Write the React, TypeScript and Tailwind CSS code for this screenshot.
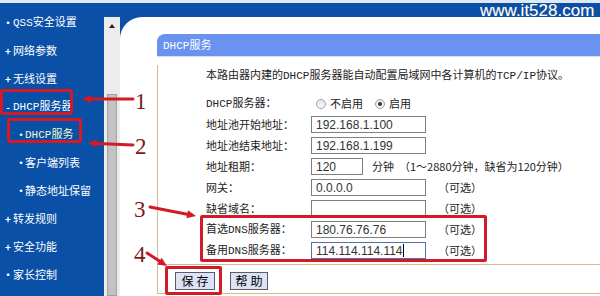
import React from "react";

const cjk = "font-['Noto_Sans_CJK_SC','Noto_Sans',sans-serif]";

const menu = [
  { label: "QSS安全设置", mark: "•", sub: false },
  { label: "网络参数", mark: "+", sub: false },
  { label: "无线设置", mark: "+", sub: false },
  { label: "DHCP服务器", mark: "-", sub: false },
  { label: "DHCP服务", mark: "•", sub: true, active: true },
  { label: "客户端列表", mark: "•", sub: true },
  { label: "静态地址保留", mark: "•", sub: true },
  { label: "转发规则", mark: "+", sub: false },
  { label: "安全功能", mark: "+", sub: false },
  { label: "家长控制", mark: "•", sub: false },
  { label: "上网控制", mark: "+", sub: false },
];

// latin runs in the old router UI are narrow monospace (SimSun-ish)
function T({ s }: { s: string }) {
  const parts = s.split(/([A-Za-z/]+)/);
  return (
    <span>
      {parts.map((p, i) =>
        /^[A-Za-z/]+$/.test(p) ? (
          <span key={i} className="font-['Liberation_Mono',monospace] text-[11px]">
            {p}
          </span>
        ) : (
          <React.Fragment key={i}>{p}</React.Fragment>
        )
      )}
    </span>
  );
}

function Field({ value, width = "w-[115px]", focused }: { value: string; width?: string; focused?: boolean }) {
  return (
    <div
      className={`${width} shrink-0 h-[17px] bg-white border flex items-center pl-[4px] text-[12px] text-[#333] font-['Liberation_Sans',sans-serif] ${
        focused ? "border-[#4f72a8]" : "border-[#7f7f7f]"
      }`}
    >
      {value}
      {focused && <span className="w-px h-[13px] bg-black" />}
    </div>
  );
}

function Row({ label, children }: { label: string; children: React.ReactNode }) {
  return (
    <div className="h-[21px] flex items-center">
      <div className="w-[105px] shrink-0 text-[11px] text-[#222] whitespace-nowrap">
        <T s={label} />
      </div>
      {children}
    </div>
  );
}

function Optional() {
  return <span className="ml-[12px] text-[11px] text-[#222] whitespace-nowrap">（可选）</span>;
}

function Radio({ checked }: { checked?: boolean }) {
  return (
    <span className="w-[10px] h-[10px] rounded-full border border-[#a0a0a0] bg-gradient-to-b from-[#e4e4e4] to-[#fafafa] flex items-center justify-center">
      {checked && <span className="w-[4px] h-[4px] rounded-full bg-[#333]" />}
    </span>
  );
}

function Arrow({ x1, y1, x2, y2 }: { x1: number; y1: number; x2: number; y2: number }) {
  const a = Math.atan2(y2 - y1, x2 - x1);
  const l = 9;
  const w = 4;
  const bx = x2 - l * Math.cos(a);
  const by = y2 - l * Math.sin(a);
  const px = -Math.sin(a) * w;
  const py = Math.cos(a) * w;
  return (
    <g>
      <line x1={x1} y1={y1} x2={bx} y2={by} stroke="#d31a26" strokeWidth={3} strokeLinecap="round" />
      <polygon points={`${x2},${y2} ${bx + px},${by + py} ${bx - px},${by - py}`} fill="#d31a26" />
    </g>
  );
}

export default function App() {
  return (
    <div className={`w-[600px] h-[296px] overflow-hidden relative flex flex-col bg-white ${cjk}`}>
      <div className="h-[3px] shrink-0 bg-[#dfe9f5]" />
      <div className="flex flex-1 min-h-0">
        {/* sidebar menu */}
        <aside className="w-[104px] shrink-0 bg-[#0a50a6] pt-[5px] flex flex-col overflow-hidden">
          {menu.map((m) => (
            <div
              key={m.label}
              className={`h-[28px] shrink-0 flex items-center text-[11px] whitespace-nowrap ${m.sub ? "pl-[16px]" : "pl-[3px]"} ${
                m.active ? "text-[#eef7cf]" : "text-white"
              }`}
            >
              <span className={`${m.sub ? "w-[9px]" : "w-[10px]"} text-center font-bold text-[10px]`}>{m.mark}</span>
              <T s={m.label} />
            </div>
          ))}
        </aside>

        <div className="flex-1 min-w-0 flex flex-col bg-[#0a50a6]">
          <div className="h-[14px] shrink-0" />
          <div className="flex flex-1 min-h-0">
            {/* scrollbar */}
            <div className="w-[16px] shrink-0 bg-[#ececec] flex flex-col items-center">
              <span className="mt-[7px] w-0 h-0 border-l-[3px] border-r-[3px] border-b-[4px] border-l-transparent border-r-transparent border-b-[#222]" />
              <div className="mt-[66px] w-[10px] flex-1 bg-[#c2c2c2] border border-[#a3a3a3]" />
            </div>

            {/* main */}
            <main className="flex-1 min-w-0 bg-white rounded-tl-[22px] pl-[37px] pt-[17px] overflow-hidden">
              <div className="w-[460px]">
                <div className="h-[22px] bg-[#6a93f0] rounded-tl-[8px] flex items-center pl-[6px] text-[11px] text-white">
                  <T s="DHCP服务" />
                </div>
                <div className="h-px bg-[#d3ddef]" />
                <div className="border-l border-b border-[#d9b98c]">
                  <div className="pl-[48px]">
                    <div className="mt-[8px] h-[20px] flex items-center text-[11px] text-[#222] whitespace-nowrap">
                      <T s="本路由器内建的DHCP服务器能自动配置局域网中各计算机的TCP/IP协议。" />
                    </div>
                    <div className="mt-[8px] flex flex-col">
                      <Row label="DHCP服务器：">
                        <div className="flex items-center text-[11px] text-[#222]">
                          <span className="ml-[5px]">
                            <Radio />
                          </span>
                          <span className="ml-[4px]">不启用</span>
                          <span className="ml-[12px]">
                            <Radio checked />
                          </span>
                          <span className="ml-[4px]">启用</span>
                        </div>
                      </Row>
                      <Row label="地址池开始地址：">
                        <Field value="192.168.1.100" />
                      </Row>
                      <Row label="地址池结束地址：">
                        <Field value="192.168.1.199" />
                      </Row>
                      <Row label="地址租期：">
                        <Field value="120" width="w-[52px]" />
                        <span className="ml-[9px] text-[11px] text-[#222]">分钟</span>
                        <span className="ml-[5px] text-[11px] text-[#222] whitespace-nowrap">（1～2880分钟，缺省为120分钟）</span>
                      </Row>
                      <Row label="网关：">
                        <Field value="0.0.0.0" />
                        <Optional />
                      </Row>
                      <Row label="缺省域名：">
                        <Field value="" />
                        <Optional />
                      </Row>
                      <Row label="首选DNS服务器：">
                        <Field value="180.76.76.76" />
                        <Optional />
                      </Row>
                      <Row label="备用DNS服务器：">
                        <Field value="114.114.114.114" focused />
                        <Optional />
                      </Row>
                    </div>
                  </div>
                  <div className="mt-[3px] border-t border-[#d9b98c] h-[29px] flex items-start pt-[7px] pl-[17px] gap-[15px]">
                    <button className="w-[40px] h-[18px] bg-[#dde2f4] border border-[#5c5c6a] text-[12px] leading-none text-black tracking-[3px] pl-[3px]">
                      保存
                    </button>
                    <button className="w-[38px] h-[18px] bg-[#dde2f4] border border-[#5c5c6a] text-[12px] leading-none text-black tracking-[3px] pl-[3px]">
                      帮助
                    </button>
                  </div>
                </div>
              </div>
            </main>
          </div>
        </div>
      </div>

      {/* watermark */}
      <span className="absolute left-[480px] top-[1px] text-[17px] leading-[20px] text-white font-['Liberation_Sans',sans-serif] [text-shadow:0_0_1px_#5a6b80]">
        www.it528.com
      </span>

      {/* annotation frames */}
      <div className="absolute left-0 top-[89px] w-[73px] h-[26px] border-[3px] border-[#d31a26] rounded-[3px]" />
      <div className="absolute left-[7px] top-[118px] w-[75px] h-[25px] border-[3px] border-[#d31a26] rounded-[3px]" />
      <div className="absolute left-[200px] top-[215px] w-[287px] h-[47px] border-[3px] border-[#d31a26] rounded-[2px]" />
      <div className="absolute left-[165px] top-[266px] w-[57px] h-[29px] border-[3px] border-[#d31a26] rounded-[2px]" />

      {/* annotation arrows */}
      <svg className="absolute inset-0 pointer-events-none" width={600} height={296}>
        <Arrow x1={133} y1={99} x2={82} y2={99} />
        <Arrow x1={133} y1={145} x2={88} y2={143} />
        <Arrow x1={150} y1={207} x2={196} y2={216} />
        <Arrow x1={147} y1={253} x2={167} y2={266} />
      </svg>

      {/* annotation numbers */}
      <span className="absolute left-[135px] top-[89px] text-[23px] leading-[26px] text-[#7b1a1a] font-['Liberation_Serif',serif]">1</span>
      <span className="absolute left-[135px] top-[134px] text-[23px] leading-[26px] text-[#7b1a1a] font-['Liberation_Serif',serif]">2</span>
      <span className="absolute left-[134px] top-[197px] text-[23px] leading-[26px] text-[#7b1a1a] font-['Liberation_Serif',serif]">3</span>
      <span className="absolute left-[134px] top-[242px] text-[23px] leading-[26px] text-[#7b1a1a] font-['Liberation_Serif',serif]">4</span>
    </div>
  );
}
